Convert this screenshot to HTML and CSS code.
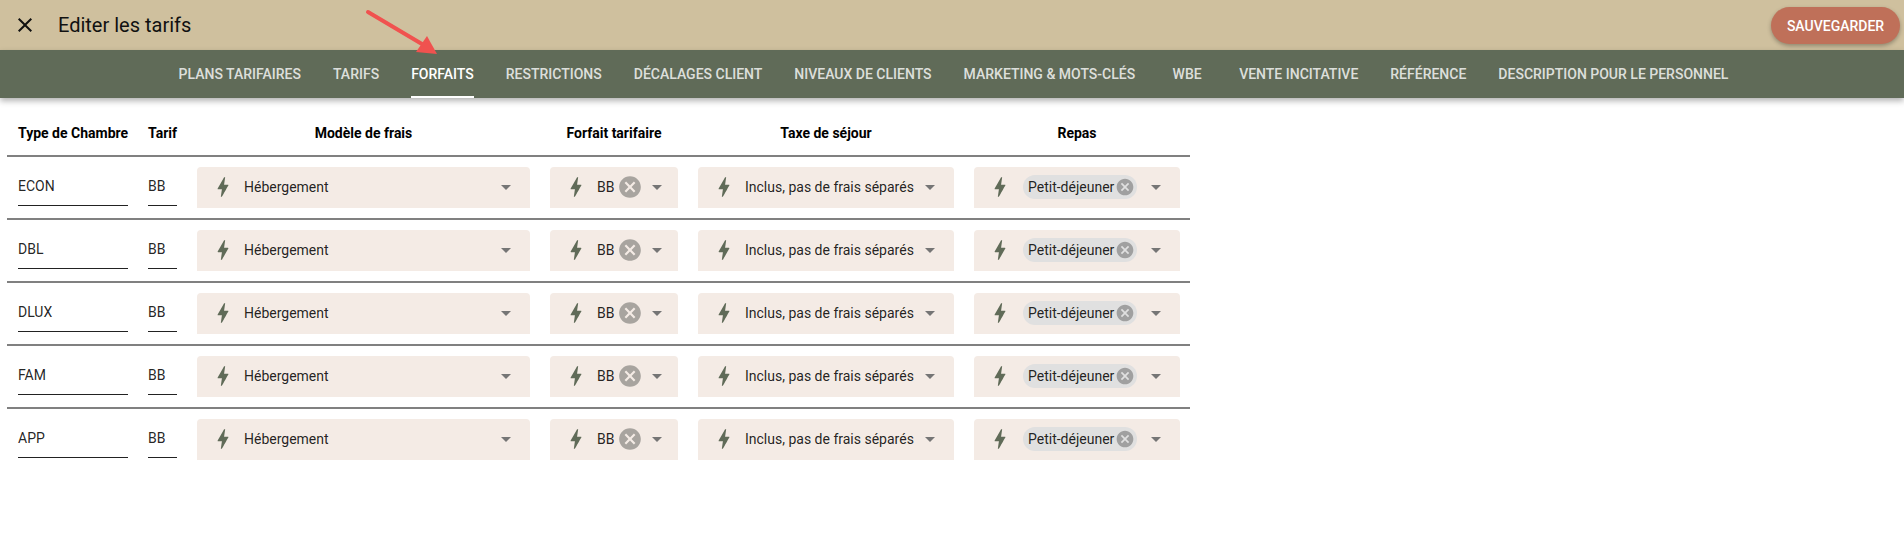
FILE: index.html
```html
<!DOCTYPE html>
<html>
<head>
  <meta charset="utf-8">
  <title>Editer les tarifs</title>
  <link rel="stylesheet" href="styles.css">
</head>
<body>
  <svg class="defs" width="0" height="0">
    <symbol id="bolt" viewBox="0 0 24 24"><path d="M11 21h-1l1-7H7.5c-.58 0-.57-.32-.38-.66.19-.34.05-.08.07-.12C8.48 10.94 10.42 7.54 13 3h1l-1 7h3.5c.49 0 .56.33.47.51l-.07.15C12.96 17.55 11 21 11 21z"/></symbol>
    <symbol id="cancel" viewBox="0 0 24 24"><path d="M12 2C6.47 2 2 6.47 2 12s4.47 10 10 10 10-4.47 10-10S17.53 2 12 2zm5 13.59L15.59 17 12 13.41 8.41 17 7 15.59 10.59 12 7 8.41 8.41 7 12 10.59 15.59 7 17 8.41 13.41 12 17 15.59z"/></symbol>
  </svg>

  <header class="topbar">
    <svg class="close" viewBox="0 0 24 24"><path d="M19 6.41 17.59 5 12 10.59 6.41 5 5 6.41 10.59 12 5 17.59 6.41 19 12 13.41 17.59 19 19 17.59 13.41 12z"/></svg>
    <h1 class="title">Editer les tarifs</h1>
    <button class="save">SAUVEGARDER</button>
  </header>

  <nav class="tabs">
    <a class="tab">PLANS TARIFAIRES</a>
    <a class="tab">TARIFS</a>
    <a class="tab active">FORFAITS</a>
    <a class="tab">RESTRICTIONS</a>
    <a class="tab">DÉCALAGES CLIENT</a>
    <a class="tab">NIVEAUX DE CLIENTS</a>
    <a class="tab">MARKETING &amp; MOTS-CLÉS</a>
    <a class="tab">WBE</a>
    <a class="tab">VENTE INCITATIVE</a>
    <a class="tab">RÉFÉRENCE</a>
    <a class="tab">DESCRIPTION POUR LE PERSONNEL</a>
  </nav>

  <svg class="arrow" viewBox="0 0 90 50" width="90" height="50">
    <path d="M3 3 L62 38" stroke="#f0524f" stroke-width="4" stroke-linecap="round" fill="none"/>
    <path d="M72 45 L51 43 L62 27 Z" fill="#f0524f"/>
  </svg>

  <main class="table">
    <div class="row head">
      <div>Type de Chambre</div>
      <div>Tarif</div>
      <div class="center">Modèle de frais</div>
      <div class="center">Forfait tarifaire</div>
      <div class="center">Taxe de séjour</div>
      <div class="center">Repas</div>
    </div>

    <div class="row">
      <div class="input">ECON</div>
      <div class="input">BB</div>
      <div class="field"><svg class="bolt"><use href="#bolt"/></svg><span class="value">Hébergement</span><i class="caret"></i></div>
      <div class="field"><svg class="bolt"><use href="#bolt"/></svg><span class="value short">BB</span><svg class="clear"><use href="#cancel"/></svg><i class="caret"></i></div>
      <div class="field"><svg class="bolt"><use href="#bolt"/></svg><span class="value">Inclus, pas de frais séparés</span><i class="caret"></i></div>
      <div class="field meal"><svg class="bolt"><use href="#bolt"/></svg><span class="chip">Petit-déjeuner<svg class="chip-x"><use href="#cancel"/></svg></span><i class="caret"></i></div>
    </div>
    <div class="row">
      <div class="input">DBL</div>
      <div class="input">BB</div>
      <div class="field"><svg class="bolt"><use href="#bolt"/></svg><span class="value">Hébergement</span><i class="caret"></i></div>
      <div class="field"><svg class="bolt"><use href="#bolt"/></svg><span class="value short">BB</span><svg class="clear"><use href="#cancel"/></svg><i class="caret"></i></div>
      <div class="field"><svg class="bolt"><use href="#bolt"/></svg><span class="value">Inclus, pas de frais séparés</span><i class="caret"></i></div>
      <div class="field meal"><svg class="bolt"><use href="#bolt"/></svg><span class="chip">Petit-déjeuner<svg class="chip-x"><use href="#cancel"/></svg></span><i class="caret"></i></div>
    </div>
    <div class="row">
      <div class="input">DLUX</div>
      <div class="input">BB</div>
      <div class="field"><svg class="bolt"><use href="#bolt"/></svg><span class="value">Hébergement</span><i class="caret"></i></div>
      <div class="field"><svg class="bolt"><use href="#bolt"/></svg><span class="value short">BB</span><svg class="clear"><use href="#cancel"/></svg><i class="caret"></i></div>
      <div class="field"><svg class="bolt"><use href="#bolt"/></svg><span class="value">Inclus, pas de frais séparés</span><i class="caret"></i></div>
      <div class="field meal"><svg class="bolt"><use href="#bolt"/></svg><span class="chip">Petit-déjeuner<svg class="chip-x"><use href="#cancel"/></svg></span><i class="caret"></i></div>
    </div>
    <div class="row">
      <div class="input">FAM</div>
      <div class="input">BB</div>
      <div class="field"><svg class="bolt"><use href="#bolt"/></svg><span class="value">Hébergement</span><i class="caret"></i></div>
      <div class="field"><svg class="bolt"><use href="#bolt"/></svg><span class="value short">BB</span><svg class="clear"><use href="#cancel"/></svg><i class="caret"></i></div>
      <div class="field"><svg class="bolt"><use href="#bolt"/></svg><span class="value">Inclus, pas de frais séparés</span><i class="caret"></i></div>
      <div class="field meal"><svg class="bolt"><use href="#bolt"/></svg><span class="chip">Petit-déjeuner<svg class="chip-x"><use href="#cancel"/></svg></span><i class="caret"></i></div>
    </div>
    <div class="row last">
      <div class="input">APP</div>
      <div class="input">BB</div>
      <div class="field"><svg class="bolt"><use href="#bolt"/></svg><span class="value">Hébergement</span><i class="caret"></i></div>
      <div class="field"><svg class="bolt"><use href="#bolt"/></svg><span class="value short">BB</span><svg class="clear"><use href="#cancel"/></svg><i class="caret"></i></div>
      <div class="field"><svg class="bolt"><use href="#bolt"/></svg><span class="value">Inclus, pas de frais séparés</span><i class="caret"></i></div>
      <div class="field meal"><svg class="bolt"><use href="#bolt"/></svg><span class="chip">Petit-déjeuner<svg class="chip-x"><use href="#cancel"/></svg></span><i class="caret"></i></div>
    </div>
  </main>
</body>
</html>
```

FILE: styles.css
```css
html, body {
  height: 100%;
}
body {
  margin: 0;
  overflow: hidden;
  background-color: white;
  color: rgba(0, 0, 0, 0.87);
  font-family: Roboto, "Liberation Sans", sans-serif;
  font-size: 14px;
  position: relative;
}
.defs {
  position: absolute;
}

.topbar {
  display: flex;
  align-items: center;
  height: 50px;
  padding: 0 4px 0 13px;
  background-color: #cfc09e;
  box-sizing: border-box;
}
.close {
  width: 24px;
  height: 24px;
  fill: #111;
}
.title {
  flex: 1;
  margin: 0 0 0 21px;
  font-size: 20px;
  font-weight: 400;
  color: #111;
}
.save {
  width: 129px;
  height: 37px;
  margin-top: 1px;
  border: 0;
  border-radius: 19px;
  background-color: #bf7059;
  color: white;
  font-family: inherit;
  font-size: 14px;
  font-weight: 500;
  box-shadow: 0 2px 4px rgba(0, 0, 0, 0.3);
}

.tabs {
  display: flex;
  justify-content: center;
  height: 48px;
  padding-left: 3px;
  background-color: #606b58;
  box-shadow: 0 3px 6px rgba(0, 0, 0, 0.3);
  position: relative;
}
.tab {
  display: flex;
  align-items: center;
  justify-content: center;
  min-width: 72px;
  padding: 0 16px;
  box-sizing: border-box;
  color: rgba(255, 255, 255, 0.8);
  font-size: 14px;
  font-weight: 500;
  position: relative;
}
.tab.active {
  color: white;
}
.tab.active::after {
  content: "";
  position: absolute;
  left: 16px;
  right: 16px;
  bottom: 0;
  height: 2px;
  background-color: white;
}

.arrow {
  position: absolute;
  left: 365px;
  top: 9px;
}

.table {
  width: 1183px;
  margin-left: 7px;
}
.row {
  display: grid;
  grid-template-columns: 110px 29px 333px 128px 256px 206px;
  column-gap: 20px;
  height: 63px;
  padding: 10px 10px 0 11px;
  box-sizing: border-box;
  border-bottom: 2px solid #808080;
}
.row.head {
  height: 59px;
  padding-top: 13px;
  align-items: center;
  font-weight: 700;
  color: #000;
  white-space: nowrap;
}
.row.last {
  border-bottom: 0;
}
.center {
  text-align: center;
}
.input {
  display: flex;
  align-items: center;
  height: 39px;
  padding-bottom: 1px;
  box-sizing: border-box;
  border-bottom: 1px solid #222;
}
.field {
  display: flex;
  align-items: center;
  height: 41px;
  padding: 0 19px 2px 13px;
  box-sizing: border-box;
  background-color: #f4ebe5;
  border-radius: 4px 4px 0 0;
}
.bolt {
  flex: none;
  width: 26px;
  height: 26px;
  fill: #606b58;
}
.value {
  flex: 1;
  margin-left: 8px;
  white-space: nowrap;
}
.value.short {
  flex: none;
}
.clear {
  flex: none;
  width: 26px;
  height: 26px;
  margin-left: 3px;
  fill: #a8a49f;
}
.field .clear + .caret {
  margin-left: 9px;
}
.caret {
  flex: none;
  width: 0;
  height: 0;
  margin: 2px 0 0 auto;
  border-left: 5px solid transparent;
  border-right: 5px solid transparent;
  border-top: 5px solid #757575;
}
.chip {
  display: flex;
  align-items: center;
  height: 24px;
  margin-left: 10px;
  padding: 0 2px 0 5px;
  border-radius: 12px;
  background-color: #e0e0e0;
  white-space: nowrap;
}
.chip-x {
  width: 20px;
  height: 20px;
  margin-left: 1px;
  fill: #a0a0a0;
}
```
